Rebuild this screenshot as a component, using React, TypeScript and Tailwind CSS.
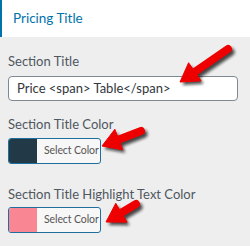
type ArrowProps = { x1: number; y1: number; x2: number; y2: number };

function arrowParts({ x1, y1, x2, y2 }: ArrowProps) {
  const dx = x2 - x1;
  const dy = y2 - y1;
  const len = Math.sqrt(dx * dx + dy * dy);
  const ux = dx / len;
  const uy = dy / len;
  const px = -uy;
  const py = ux;
  const headLen = 18;
  const headHalf = 11;
  const bx = x2 - ux * headLen;
  const by = y2 - uy * headLen;
  const head = [
    `${x2},${y2}`,
    `${bx + px * headHalf},${by + py * headHalf}`,
    `${bx - px * headHalf},${by - py * headHalf}`,
  ].join(" ");
  return { bx: bx + ux * 2, by: by + uy * 2, head };
}

function Arrow(props: ArrowProps) {
  const { bx, by, head } = arrowParts(props);
  return (
    <g>
      <g filter="url(#shadow)" transform="translate(2.5 3)" opacity="0.75">
        <line x1={props.x1} y1={props.y1} x2={bx} y2={by} stroke="#111" strokeWidth="8" strokeLinecap="round" />
        <polygon points={head} fill="#111" />
      </g>
      <line x1={props.x1} y1={props.y1} x2={bx} y2={by} stroke="#ee0000" strokeWidth="8" strokeLinecap="round" />
      <polygon points={head} fill="#ee0000" strokeLinejoin="round" stroke="#ee0000" strokeWidth="1" />
    </g>
  );
}

function ColorButton({ color }: { color: string }) {
  return (
    <button className="flex h-[26px] w-[93px] overflow-hidden rounded-[3px] border border-[#1f6f9e] bg-[#f7f7f7] p-0">
      <span className="h-full w-[28px]" style={{ backgroundColor: color }} />
      <span className="flex h-full flex-1 items-center whitespace-nowrap pl-[7px] text-[10.5px] tracking-[-0.1px] text-[#555]">
        Select Color
      </span>
    </button>
  );
}

export default function App() {
  return (
    <div className="relative h-[246px] w-[250px] overflow-hidden bg-[#eeeeee] font-['Lato',sans-serif]">
      <div className="flex h-[37px] items-center border-l-[2px] border-[#0073aa] bg-white pl-[11px] text-[13.5px] text-[#0073aa]">
        Pricing Title
      </div>

      <div className="px-2">
        <div className="mt-[14px] text-[13px] leading-[20px] text-[#4f5760]">Section Title</div>
        <div className="mt-[5px] flex h-[25px] w-[230px] items-center rounded-[4px] border border-[#7e8993] bg-white pl-[8px] text-[13px] text-[#32373c]">
          {"Price <span> Table</span>"}
        </div>

        <div className="mt-[13px] text-[13px] leading-[20px] text-[#4f5760]">Section Title Color</div>
        <div className="mt-[4px]">
          <ColorButton color="#223a47" />
        </div>

        <div className="mt-[20px] text-[13px] leading-[20px] text-[#4f5760]">
          Section Title Highlight Text Color
        </div>
        <div className="mt-[3px]">
          <ColorButton color="#f88793" />
        </div>
      </div>

      <svg className="pointer-events-none absolute inset-0" width="250" height="246">
        <defs>
          <filter id="shadow" x="-20%" y="-20%" width="140%" height="140%">
            <feGaussianBlur stdDeviation="1.5" />
          </filter>
        </defs>
        <Arrow x1={228} y1={49} x2={180} y2={82} />
        <Arrow x1={141} y1={131} x2={102} y2={146} />
        <Arrow x1={136} y1={204} x2={106} y2={222} />
      </svg>
    </div>
  );
}
